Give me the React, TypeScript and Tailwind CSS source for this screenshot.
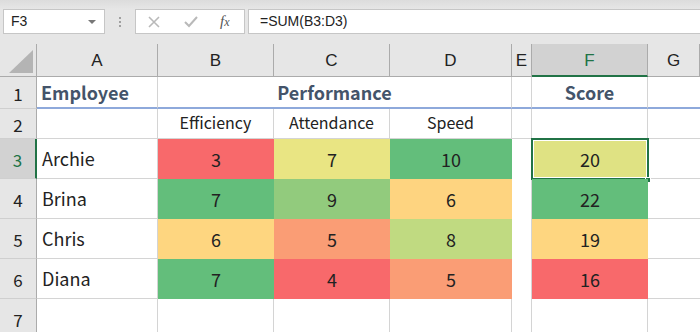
import React from 'react';

// Column widths: row header, A..G
const gridCols = 'grid grid-cols-[37px_121px_116px_116px_122px_20px_116px_52px]';
const cellFont = { fontFamily: '"Noto Sans CJK JP", "Noto Sans", sans-serif' };
const uiFont = { fontFamily: '"Liberation Sans", Arial, sans-serif' };

const rows = [
    { name: 'Archie', vals: [[3, 'bg-[#f8696b]'], [7, 'bg-[#e9e583]'], [10, 'bg-[#63be7b]']], score: [20, 'bg-[#dfe283]'] },
    { name: 'Brina', vals: [[7, 'bg-[#63be7b]'], [9, 'bg-[#92cb7d]'], [6, 'bg-[#fed480]']], score: [22, 'bg-[#63be7b]'] },
    { name: 'Chris', vals: [[6, 'bg-[#fed680]'], [5, 'bg-[#fa9d75]'], [8, 'bg-[#c0da81]']], score: [19, 'bg-[#fed680]'] },
    { name: 'Diana', vals: [[7, 'bg-[#63be7b]'], [4, 'bg-[#f8696b]'], [5, 'bg-[#fa9d75]']], score: [16, 'bg-[#f8696b]'] },
] as const;

const RowHead = ({ n, active = false, h }: { n: number; active?: boolean; h: string }) => (
    <div
        className={`${h} flex items-center justify-center pt-[2px] text-[17px] border-b border-[#cfcfcf] ${active ? 'bg-[#d2d2d2] text-[#217346] border-r-2 border-r-[#217346]' : 'bg-[#e6e6e6] text-[#222] border-r border-r-[#ababab]'}`}
        style={cellFont}
    >
        {n}
    </div>
);

function Toolbar() {
    return (
        <div className="h-[44px] bg-[#e6e6e6]" style={uiFont}>
            <div className="h-[9px] bg-gradient-to-b from-[#dcdcdc] to-[#e6e6e6]" />
            <div className="flex items-center pl-[3px]">
                {/* Name box */}
                <div className="w-[102px] h-[25px] bg-white border border-[#c6c6c6] flex items-center justify-between pl-[7px] pr-[8px] text-[14px] text-[#222]">
                    <span>F3</span>
                    <span className="w-0 h-0 border-l-[4px] border-r-[4px] border-t-[4px] border-l-transparent border-r-transparent border-t-[#777]" />
                </div>
                <div className="w-[30px] flex flex-col items-center gap-[2px]">
                    <span className="w-[2px] h-[2px] bg-[#a0a0a0]" />
                    <span className="w-[2px] h-[2px] bg-[#a0a0a0]" />
                    <span className="w-[2px] h-[2px] bg-[#a0a0a0]" />
                </div>
                {/* Cancel / enter / function */}
                <div className="w-[110px] h-[25px] bg-white border border-[#c6c6c6] flex items-center">
                    <svg width="12" height="12" viewBox="0 0 12 12" className="ml-[12px]">
                        <path d="M1 1 L11 11 M11 1 L1 11" stroke="#b9b9b9" strokeWidth="1.6" />
                    </svg>
                    <svg width="14" height="12" viewBox="0 0 14 12" className="ml-[24px]">
                        <path d="M1 6 L5 10 L13 1" stroke="#b9b9b9" strokeWidth="2" fill="none" />
                    </svg>
                    <span className="ml-[22px] text-[15px] italic text-[#555]" style={{ fontFamily: '"Liberation Serif", serif' }}>
                        f<span className="text-[12px]">x</span>
                    </span>
                </div>
                {/* Formula input */}
                <div className="ml-[3px] flex-1 h-[25px] bg-white border-y border-l border-[#c6c6c6] flex items-center pl-[11px] text-[14px] text-[#222]">
                    =SUM(B3:D3)
                </div>
            </div>
        </div>
    );
}

export default function App() {
    const letters = ['A', 'B', 'C', 'D', 'E', 'F', 'G'];
    const gl = 'border-r border-b border-[#d4d4d4]';
    const head = 'border-r border-[#d4d4d4] border-b-2 border-b-[#8ea9db]';

    return (
        <div className="w-[700px] h-[332px] overflow-hidden bg-white">
            <Toolbar />

            {/* Column headers */}
            <div className={`${gridCols} h-[33px] bg-[#e6e6e6]`} style={uiFont}>
                <div className="relative border-r border-b border-[#ababab]">
                    <svg className="absolute right-[3px] bottom-[3px]" width="24" height="23" viewBox="0 0 24 23">
                        <polygon points="24,0 24,23 0,23" fill="#b4b4b4" />
                    </svg>
                </div>
                {letters.map((l) => (
                    <div
                        key={l}
                        className={`flex items-center justify-center text-[17px] pt-[2px] ${l === 'F' ? 'bg-[#d2d2d2] text-[#217346] border-b-2 border-b-[#217346] border-r border-r-[#ababab]' : 'text-[#222] border-r border-b border-[#ababab]'}`}
                    >
                        {l}
                    </div>
                ))}
            </div>

            {/* Row 1: headings */}
            <div className={`${gridCols} h-[32px]`} style={cellFont}>
                <RowHead n={1} h="h-[32px]" />
                <div className={`${head} flex items-center pl-[4px] text-[18px] font-bold text-[#44546a]`}>Employee</div>
                <div className={`col-span-3 ${head} flex items-center justify-center text-[18px] font-bold text-[#44546a]`}>Performance</div>
                <div className={head} />
                <div className={`${head} flex items-center justify-center text-[18px] font-bold text-[#44546a]`}>Score</div>
                <div className="border-b-2 border-b-[#8ea9db]" />
            </div>

            {/* Row 2: sub headings */}
            <div className={`${gridCols} h-[30px]`} style={cellFont}>
                <RowHead n={2} h="h-[30px]" />
                <div className={gl} />
                {['Efficiency', 'Attendance', 'Speed'].map((t) => (
                    <div key={t} className={`${gl} flex items-center justify-center pb-[3px] text-[16px] text-[#222]`}>{t}</div>
                ))}
                <div className={gl} />
                <div className={gl} />
                <div className="border-b border-[#d4d4d4]" />
            </div>

            {/* Data rows 3-6 */}
            {rows.map((r, i) => (
                <div key={r.name} className={`${gridCols} h-[40px]`} style={cellFont}>
                    <RowHead n={i + 3} h="h-[40px]" active={i === 0} />
                    <div className={`${gl} flex items-center pl-[5px] text-[18px] text-[#222]`}>{r.name}</div>
                    {r.vals.map(([v, bg], j) => (
                        <div key={j} className={`${bg} flex items-center justify-center text-[18px] text-[#222]`}>{v}</div>
                    ))}
                    <div className="border-r border-[#d4d4d4]" />
                    <div className={`${r.score[1]} relative flex items-center justify-center text-[18px] text-[#222]`}>
                        {r.score[0]}
                        {i === 0 && (
                            <>
                                <div className="absolute -top-[1px] -left-[1px] -right-[1px] -bottom-[1px] border-2 border-[#217346]">
                                    <div className="w-full h-full border border-white" />
                                </div>
                                <div className="absolute -right-[3px] -bottom-[4px] w-[6px] h-[6px] bg-[#217346] border border-white" />
                            </>
                        )}
                    </div>
                    <div className="border-b border-[#d4d4d4]" />
                </div>
            ))}

            {/* Row 7 */}
            <div className={`${gridCols} h-[40px]`} style={cellFont}>
                <RowHead n={7} h="h-[40px]" />
                {letters.map((l) => (
                    <div key={l} className={l === 'G' ? '' : 'border-r border-[#d4d4d4]'} />
                ))}
            </div>
        </div>
    );
}
